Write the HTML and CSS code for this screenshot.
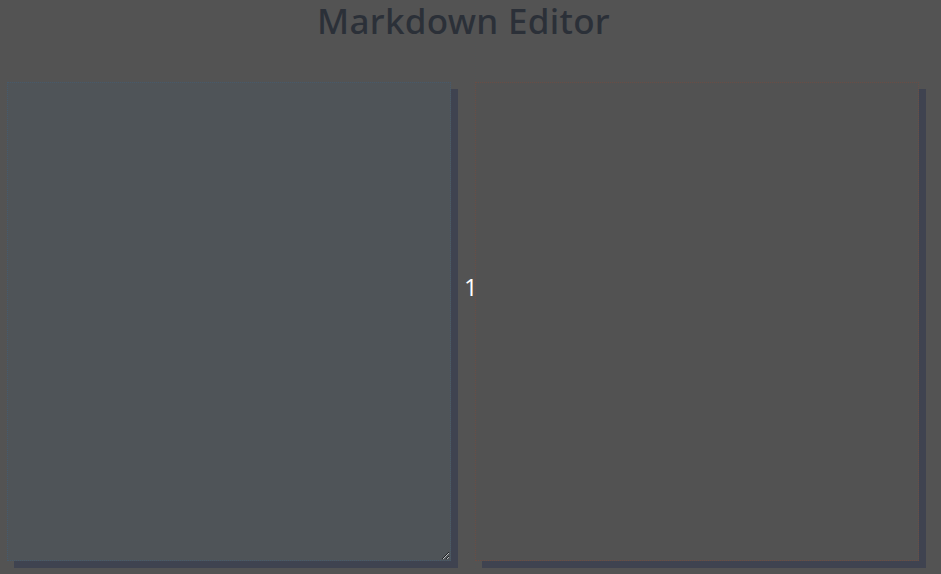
FILE: index.html
```html
<!DOCTYPE html>
<html>
<head>
<meta charset="utf-8">
<link rel="stylesheet" href="styles.css">
</head>
<body>
<h1 class="title">Markdown Editor</h1>
<main class="editor">
  <textarea class="input"></textarea>
  <div class="divider">1</div>
  <div class="preview"></div>
</main>
</body>
</html>
```

FILE: styles.css
```css
html, body {
  margin: 0;
  padding: 0;
  background: #535353;
}
body {
  font-family: "Noto Sans", "DejaVu Sans", sans-serif;
  min-height: 574px;
  overflow: hidden;
}
.title {
  margin: 0;
  padding: 0 14px 0 0;
  height: 82px;
  box-sizing: border-box;
  text-align: center;
  font-size: 35px;
  font-weight: 500;
  line-height: 42px;
  letter-spacing: 0.3px;
  color: #2b3038;
}
.editor {
  display: flex;
  padding-left: 7px;
  height: 479px;
}
.input {
  width: 444px;
  height: 479px;
  box-sizing: border-box;
  margin: 0;
  border: 1px dotted #475a6b;
  background: #4f5458;
  box-shadow: 7px 7px 0 #3f4350;
  resize: both;
  outline: none;
  padding: 0;
}
.divider {
  width: 24px;
  padding: 189px 0 0 13px;
  box-sizing: border-box;
  color: #ffffff;
  font-family: "Open Sans", sans-serif;
  font-size: 24px;
  line-height: 32px;
}
.preview {
  width: 444px;
  height: 479px;
  box-sizing: border-box;
  border: 1px dotted #6b4d44;
  background: #525252;
  box-shadow: 7px 7px 0 #3f4350;
}
```
